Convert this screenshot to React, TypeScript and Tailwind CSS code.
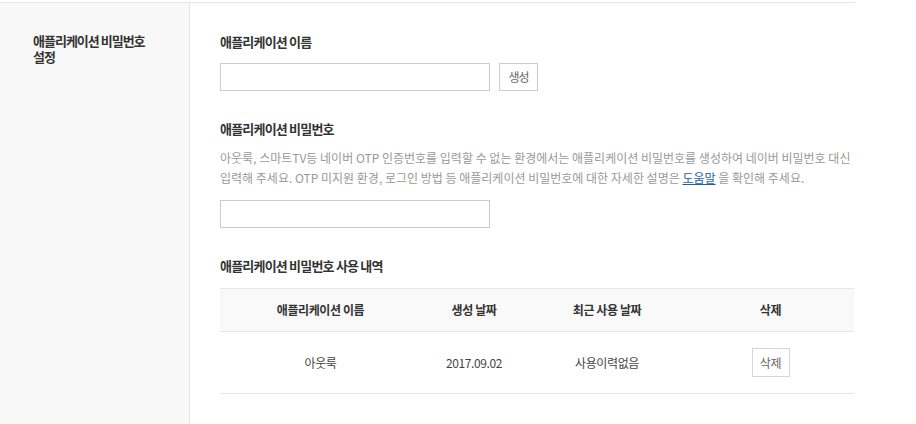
const font = { fontFamily: '"Noto Sans CJK KR", "Noto Sans", sans-serif' };

const rows = [{ name: "아웃룩", created: "2017.09.02", lastUsed: "사용이력없음" }];

export default function App() {
  return (
    <div className="min-h-[424px] bg-white" style={font}>
      <div className="mt-[2px] flex w-[855px] min-h-[422px] border-t border-[#e6e6e6]">
        {/* left label column */}
        <div className="w-[190px] shrink-0 border-r border-[#e6e6e6] bg-[#f8f8f8] pl-[33px] pt-[30px]">
          <p className="text-[13px] font-bold leading-[16px] tracking-[-1px] text-[#333]">
            애플리케이션 비밀번호
            <br />
            설정
          </p>
        </div>

        {/* content */}
        <div className="flex-1 pl-[30px] pt-[30px] pb-[40px]">
          <h3 className="text-[13px] font-bold leading-[18px] tracking-[-0.8px] text-[#333]">
            애플리케이션 이름
          </h3>
          <div className="mt-[12px] flex items-center gap-[9px]">
            <input className="h-[28px] w-[270px] border border-[#cccccc] bg-white px-2 text-[12px] outline-none" />
            <button className="h-[28px] w-[39px] border border-[#cccccc] bg-white text-[12px] tracking-[-1px] text-[#666]">
              생성
            </button>
          </div>

          <h3 className="mt-[29px] text-[13px] font-bold leading-[18px] tracking-[-0.8px] text-[#333]">
            애플리케이션 비밀번호
          </h3>
          <p className="mt-[10px] whitespace-nowrap text-[12px] leading-[20px] tracking-[0px] text-[#999]">
            아웃룩, 스마트TV등 네이버 OTP 인증번호를 입력할 수 없는 환경에서는 애플리케이션 비밀번호를 생성하여 네이버 비밀번호 대신
            <br />
            입력해 주세요. OTP 미지원 환경, 로그인 방법 등 애플리케이션 비밀번호에 대한 자세한 설명은{" "}
            <a href="#" className="text-[#1d5fa8] underline">
              도움말
            </a>{" "}
            을 확인해 주세요.
          </p>
          <input className="mt-[12px] block h-[28px] w-[270px] border border-[#cccccc] bg-white px-2 text-[12px] outline-none" />

          <h3 className="mt-[29px] text-[13px] font-bold leading-[18px] tracking-[-0.8px] text-[#333]">
            애플리케이션 비밀번호 사용 내역
          </h3>

          <div className="mt-[13px] w-[634px] text-[12px] tracking-[-0.4px] text-[#333]">
            <div className="grid h-[44px] grid-cols-[201px_106px_160px_1fr] items-center border-y border-[#e6e6e6] bg-[#f9f9f9] text-center font-bold">
              <div>애플리케이션 이름</div>
              <div>생성 날짜</div>
              <div>최근 사용 날짜</div>
              <div>삭제</div>
            </div>
            {rows.map((r) => (
              <div
                key={r.name}
                className="grid h-[62px] grid-cols-[201px_106px_160px_1fr] items-center border-b border-[#e6e6e6] text-center text-[#444]"
              >
                <div>{r.name}</div>
                <div>{r.created}</div>
                <div>{r.lastUsed}</div>
                <div className="flex justify-center">
                  <button className="h-[29px] w-[38px] border border-[#d5d5d5] bg-white text-[12px] text-[#666]">
                    삭제
                  </button>
                </div>
              </div>
            ))}
          </div>
        </div>
      </div>
    </div>
  );
}
